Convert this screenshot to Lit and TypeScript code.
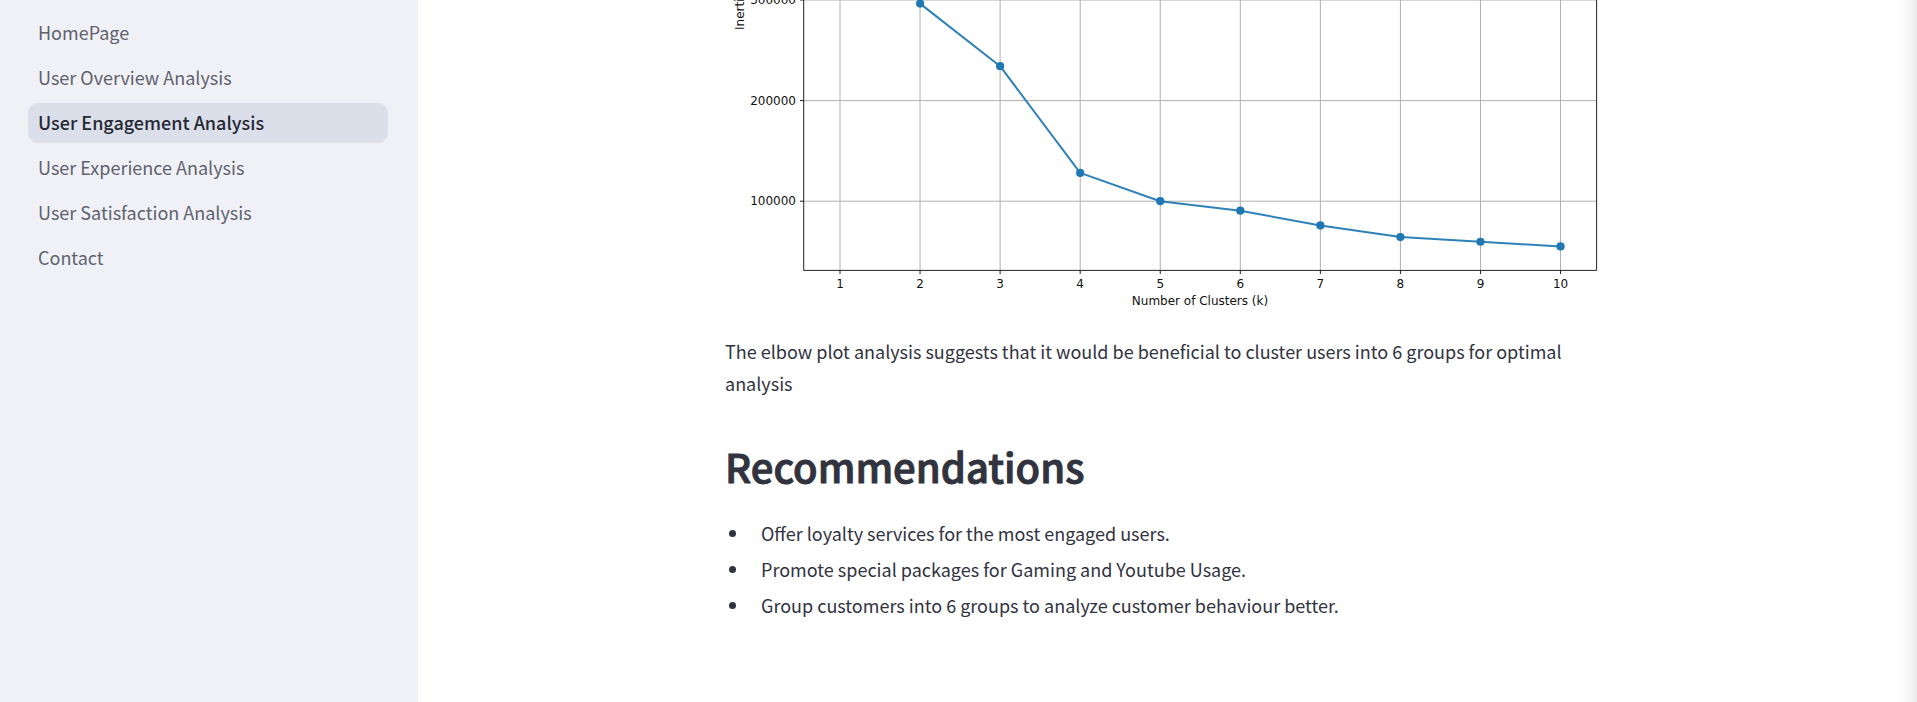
import { LitElement, html, css, svg } from "lit";
import { customElement, state } from "lit/decorators.js";
import { classMap } from "lit/directives/class-map.js";

const PAGES = [
  "HomePage",
  "User Overview Analysis",
  "User Engagement Analysis",
  "User Experience Analysis",
  "User Satisfaction Analysis",
  "Contact",
];

const RECOMMENDATIONS = [
  "Offer loyalty services for the most engaged users.",
  "Promote special packages for Gaming and Youtube Usage.",
  "Group customers into 6 groups to analyze customer behaviour better.",
];

@customElement("page-nav")
export class PageNav extends LitElement {
  @state() private current = "User Engagement Analysis";

  static styles = css`
    :host {
      display: block;
    }
    .list {
      display: flex;
      flex-direction: column;
      gap: 5px;
      margin: 0;
      padding: 0;
      list-style: none;
    }
    .link {
      display: block;
      padding: 0 10px 2px;
      border-radius: 10px;
      line-height: 38px;
      color: #5f616e;
      text-decoration: none;
      white-space: nowrap;
    }
    .link.active {
      background: #dadfe9;
      color: #262834;
      font-weight: 500;
    }
  `;

  private select(event: Event, page: string) {
    event.preventDefault();
    this.current = page;
  }

  render() {
    return html`<nav aria-label="Pages">
      <ul class="list">
        ${PAGES.map(
          (page) => html`<li>
            <a
              class=${classMap({ link: true, active: page === this.current })}
              href="#"
              @click=${(e: Event) => this.select(e, page)}
              >${page}</a
            >
          </li>`,
        )}
      </ul>
    </nav>`;
  }
}

@customElement("elbow-chart")
export class ElbowChart extends LitElement {
  static styles = css`
    :host {
      display: block;
    }
    .chart {
      display: block;
      width: 100%;
      height: auto;
      font-family: "DejaVu Sans", sans-serif;
      font-size: 12px;
    }
    .grid {
      stroke: #b0b0b0;
      stroke-width: 1;
    }
    .axis {
      fill: none;
      stroke: #222;
      stroke-width: 1;
    }
    .series {
      fill: none;
      stroke: #1f77b4;
      stroke-width: 2;
      stroke-linejoin: round;
      opacity: 0.93;
    }
    .dot {
      fill: #1f77b4;
    }
    .label {
      fill: #111;
    }
  `;

  private x(k: number) {
    return 115 + (k - 1) * 80.06;
  }

  private y(inertia: number) {
    return 301.8 - inertia * 0.001006;
  }

  render() {
    const clusters = [1, 2, 3, 4, 5, 6, 7, 8, 9, 10];
    const levels = [100000, 200000, 300000];
    const inertia = [
      [2, 296400], [3, 234200], [4, 128100], [5, 100000], [6, 90600],
      [7, 75900], [8, 64300], [9, 59700], [10, 55000],
    ];
    const points = inertia.map(([k, v]) => `${this.x(k)},${this.y(v)}`).join(" ");
    return html`<svg class="chart" viewBox="0 0 880 312" role="img" aria-label="Inertia by number of clusters">
      ${clusters.map(
        (k) => svg`
          <line class="grid" x1=${this.x(k)} x2=${this.x(k)} y1="0" y2="270"></line>
          <line class="axis" x1=${this.x(k)} x2=${this.x(k)} y1="270" y2="274"></line>
          <text class="label" x=${this.x(k)} y="288" text-anchor="middle">${k}</text>`,
      )}
      ${levels.map(
        (v) => svg`
          <line class="grid" x1="79" x2="871" y1=${this.y(v)} y2=${this.y(v)}></line>
          <line class="axis" x1="75" x2="79" y1=${this.y(v)} y2=${this.y(v)}></line>
          <text class="label" x="71" y=${this.y(v) + 4} text-anchor="end">${v}</text>`,
      )}
      <path class="axis" d="M78.7 0V270.4H871.6V0"></path>
      <polyline class="series" points=${points}></polyline>
      ${inertia.map(
        ([k, v]) => svg`<circle class="dot" cx=${this.x(k)} cy=${this.y(v)} r="4.1"></circle>`,
      )}
      <text class="label" x="475" y="305" text-anchor="middle">Number of Clusters (k)</text>
      <text class="label" transform="translate(19 30) rotate(-90)">Inertia</text>
    </svg>`;
  }
}

@customElement("app-root")
export class AppRoot extends LitElement {
  static styles = css`
    :host {
      display: flex;
      min-height: 100vh;
      font-family: "Noto Sans CJK SC", "Noto Sans", sans-serif;
      font-size: 18px;
      color: #31333f;
      background: linear-gradient(to left, #e8e8e8, #f5f5f5 6px, #fbfbfb 13px, #ffffff 24px);
    }
    .sidebar {
      box-sizing: border-box;
      flex: 0 0 418px;
      padding: 13px 30px 0 28px;
      background: #f0f1f6;
    }
    .main {
      flex: 1;
      min-width: 0;
      padding: 0 5px 0 0;
    }
    .content {
      max-width: 880px;
      margin: 0 auto;
    }
    .text {
      margin: 23px 0 0;
      line-height: 32px;
    }
    .title {
      margin: 31px 0 0;
      font-size: 40px;
      font-weight: 500;
      line-height: 72px;
      -webkit-text-stroke: 1px currentColor;
    }
    .items {
      margin: 15px 0 0;
      padding: 0 0 0 25px;
      line-height: 32px;
    }
    .item {
      margin-bottom: 4px;
      padding-left: 11px;
    }
  `;

  render() {
    return html`
      <aside class="sidebar"><page-nav></page-nav></aside>
      <main class="main">
        <div class="content">
          <elbow-chart></elbow-chart>
          <p class="text">
            The elbow plot analysis suggests that it would be beneficial to cluster users into 6 groups for optimal analysis
          </p>
          <h1 class="title">Recommendations</h1>
          <ul class="items">
            ${RECOMMENDATIONS.map((item) => html`<li class="item">${item}</li>`)}
          </ul>
        </div>
      </main>
    `;
  }
}
